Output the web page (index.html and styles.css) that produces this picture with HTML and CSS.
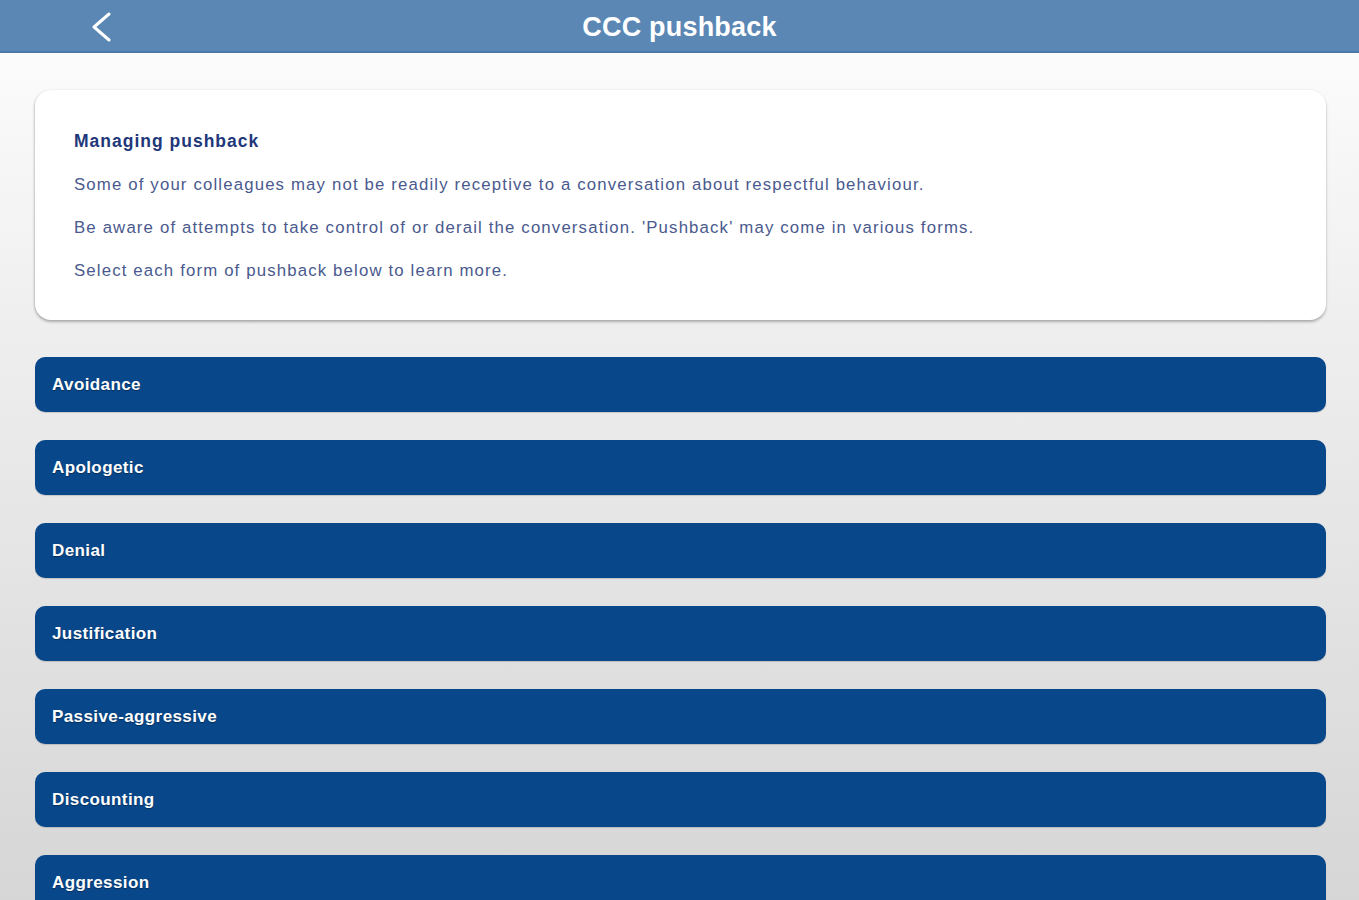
FILE: index.html
```html
<!DOCTYPE html>
<html lang="en">
<head>
  <meta charset="UTF-8">
  <title>CCC pushback</title>
  <link rel="stylesheet" href="styles.css">
</head>
<body>
  <header class="topbar">
    <button class="back" aria-label="Back">
      <svg width="24" height="30" viewBox="0 0 24 30">
        <path d="M20 2 L5 15 L20 28" fill="none" stroke="#fff" stroke-width="3" stroke-linecap="round" stroke-linejoin="round"/>
      </svg>
    </button>
    <h1>CCC pushback</h1>
  </header>

  <main class="content">
    <section class="intro">
      <h2>Managing pushback</h2>
      <p>Some of your colleagues may not be readily receptive to a conversation about respectful behaviour.</p>
      <p>Be aware of attempts to take control of or derail the conversation. 'Pushback' may come in various forms.</p>
      <p>Select each form of pushback below to learn more.</p>
    </section>

    <ul class="forms">
      <li><a href="#">Avoidance</a></li>
      <li><a href="#">Apologetic</a></li>
      <li><a href="#">Denial</a></li>
      <li><a href="#">Justification</a></li>
      <li><a href="#">Passive-aggressive</a></li>
      <li><a href="#">Discounting</a></li>
      <li><a href="#">Aggression</a></li>
    </ul>
  </main>
</body>
</html>
```

FILE: styles.css
```css
* {
  box-sizing: border-box;
}

html, body {
  height: 100%;
}

body {
  margin: 0;
  font-family: 'Liberation Sans', Arial, sans-serif;
  background: linear-gradient(to bottom, #ffffff 0, #fbfbfb 60px, #ececec 380px, #d6d6d6 900px);
  overflow: hidden;
}

.topbar {
  height: 53px;
  padding-top: 3px;
  background-color: #5a87b4;
  border-bottom: 2px solid #4a79a8;
  display: flex;
  align-items: center;
  justify-content: center;
  position: relative;
}

.topbar h1 {
  margin: 0;
  color: #fff;
  font-size: 27px;
  font-weight: bold;
  letter-spacing: 0.2px;
}

.back {
  position: absolute;
  left: 89px;
  top: 12px;
  background: none;
  border: none;
  padding: 0;
  cursor: pointer;
}

.content {
  padding: 37px 33px 0 35px;
}

.intro {
  background: #fff;
  border-radius: 16px;
  box-shadow: 0 2px 3px rgba(0, 0, 0, 0.28), -1px 0 2px rgba(0, 0, 0, 0.08);
  padding: 41px 39px 24px;
  height: 230px;
}

.intro h2 {
  margin: 0 0 22px;
  font-size: 17.5px;
  font-weight: bold;
  letter-spacing: 1px;
  color: #22377a;
}

.intro p {
  margin: 0 0 22px;
  font-size: 16.8px;
  line-height: 21px;
  letter-spacing: 1.15px;
  color: #4a5a8e;
}

.forms {
  list-style: none;
  margin: 37px 0 0;
  padding: 0;
  display: flex;
  flex-direction: column;
  gap: 28px;
}

.forms a {
  display: flex;
  align-items: center;
  height: 55px;
  padding: 0 17px;
  background-color: #08478a;
  border-radius: 10px;
  box-shadow: 0 1px 1px rgba(0, 0, 0, 0.15);
  color: #fff;
  text-decoration: none;
  font-size: 17px;
  font-weight: bold;
  letter-spacing: 0.4px;
  text-shadow: 0 1px 1px rgba(0, 0, 0, 0.35);
}
```
